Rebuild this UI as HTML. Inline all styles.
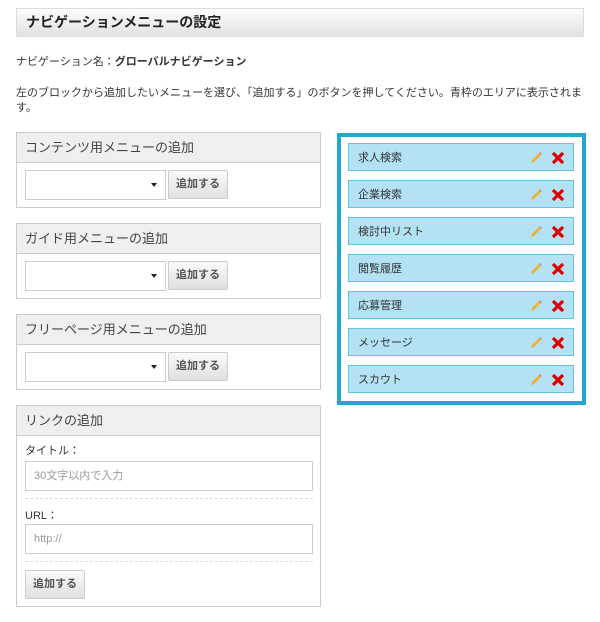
<!DOCTYPE html>
<html><head><meta charset="utf-8"><style>
*{box-sizing:border-box;margin:0;padding:0}
body{width:600px;height:622px;background:#fff;font-family:"Liberation Sans","Noto Sans CJK JP",sans-serif;color:#333;font-size:11px;position:relative;overflow:hidden}
.a{position:absolute}
.hd{left:16px;top:8px;width:568px;height:29px;background:linear-gradient(#fdfdfd,#e2e2e2);border:1px solid #ddd;font-weight:bold;font-size:14px;line-height:27px;padding-left:9px;color:#222}
.box{left:16px;width:305px;border:1px solid #ccc;background:#fff}
.bh{height:30px;background:#efefef;border-bottom:1px solid #ccc;font-size:13px;line-height:29px;padding-left:8px;color:#444}
.sel{position:absolute;left:8px;width:141px;height:30px;border:1px solid #ccc;background:#fff}
.sel:after{content:"";position:absolute;right:8px;top:12px;border-left:3px solid transparent;border-right:3px solid transparent;border-top:4px solid #222}
.btn{position:absolute;width:60px;height:29px;border:1px solid #ccc;border-radius:2px;background:linear-gradient(#fafafa,#e0e0e0);font-size:11px;line-height:27px;text-align:center;color:#555;font-weight:bold}
.inp{position:absolute;left:8px;width:288px;height:30px;border:1px solid #ccc;font-size:11px;line-height:28px;padding-left:8px;color:#999}
.dash{position:absolute;left:8px;width:288px;border-top:1px dashed #ddd}
.panel{left:337px;top:133px;width:249px;height:272px;border:4px solid #22a7d4;background:#fff}
.it{position:absolute;left:7px;width:226px;height:28px;background:#b2e2f3;border:1px solid #62c3e2;font-size:11px;line-height:28px;padding-left:9px;color:#333}
.it svg{position:absolute;top:7px}
</style></head><body>
<div class="a hd">ナビゲーションメニューの設定</div>
<div class="a" style="left:16px;top:53px">ナビゲーション名：<b>グローバルナビゲーション</b></div>
<div class="a" style="left:16px;top:86px;width:570px;line-height:15px">左のブロックから追加したいメニューを選び、「追加する」のボタンを押してください。青枠のエリアに表示されます。</div>

<div class="a box" style="top:132px;height:76px"><div class="bh">コンテンツ用メニューの追加</div><div class="sel" style="top:37px"></div><div class="btn" style="left:151px;top:37px">追加する</div></div>
<div class="a box" style="top:223px;height:76px"><div class="bh">ガイド用メニューの追加</div><div class="sel" style="top:37px"></div><div class="btn" style="left:151px;top:37px">追加する</div></div>
<div class="a box" style="top:314px;height:76px"><div class="bh">フリーページ用メニューの追加</div><div class="sel" style="top:37px"></div><div class="btn" style="left:151px;top:37px">追加する</div></div>
<div class="a box" style="top:405px;height:202px"><div class="bh">リンクの追加</div>
<div class="a" style="left:8px;top:36px">タイトル：</div>
<div class="inp" style="top:55px">30文字以内で入力</div>
<div class="dash" style="top:92px"></div>
<div class="a" style="left:8px;top:101px">URL：</div>
<div class="inp" style="top:118px">http://</div>
<div class="dash" style="top:155px"></div>
<div class="btn" style="left:8px;top:164px">追加する</div>
</div>

<div class="a panel">
<div class="it" style="top:6px">求人検索<svg style="left:180px" width="14" height="14"><path d="M2 12L3 9L10 2L12 4L5 11Z" fill="#f0b030"/><path d="M10 2L12 4L13 3L11 1Z" fill="#b08ac8"/></svg><svg style="left:202px" width="14" height="14"><path d="M2 2L12 12M12 2L2 12" stroke="#d00" stroke-width="3.2"/></svg></div>
<div class="it" style="top:43px">企業検索<svg style="left:180px" width="14" height="14"><path d="M2 12L3 9L10 2L12 4L5 11Z" fill="#f0b030"/><path d="M10 2L12 4L13 3L11 1Z" fill="#b08ac8"/></svg><svg style="left:202px" width="14" height="14"><path d="M2 2L12 12M12 2L2 12" stroke="#d00" stroke-width="3.2"/></svg></div>
<div class="it" style="top:80px">検討中リスト<svg style="left:180px" width="14" height="14"><path d="M2 12L3 9L10 2L12 4L5 11Z" fill="#f0b030"/><path d="M10 2L12 4L13 3L11 1Z" fill="#b08ac8"/></svg><svg style="left:202px" width="14" height="14"><path d="M2 2L12 12M12 2L2 12" stroke="#d00" stroke-width="3.2"/></svg></div>
<div class="it" style="top:117px">閲覧履歴<svg style="left:180px" width="14" height="14"><path d="M2 12L3 9L10 2L12 4L5 11Z" fill="#f0b030"/><path d="M10 2L12 4L13 3L11 1Z" fill="#b08ac8"/></svg><svg style="left:202px" width="14" height="14"><path d="M2 2L12 12M12 2L2 12" stroke="#d00" stroke-width="3.2"/></svg></div>
<div class="it" style="top:154px">応募管理<svg style="left:180px" width="14" height="14"><path d="M2 12L3 9L10 2L12 4L5 11Z" fill="#f0b030"/><path d="M10 2L12 4L13 3L11 1Z" fill="#b08ac8"/></svg><svg style="left:202px" width="14" height="14"><path d="M2 2L12 12M12 2L2 12" stroke="#d00" stroke-width="3.2"/></svg></div>
<div class="it" style="top:191px">メッセージ<svg style="left:180px" width="14" height="14"><path d="M2 12L3 9L10 2L12 4L5 11Z" fill="#f0b030"/><path d="M10 2L12 4L13 3L11 1Z" fill="#b08ac8"/></svg><svg style="left:202px" width="14" height="14"><path d="M2 2L12 12M12 2L2 12" stroke="#d00" stroke-width="3.2"/></svg></div>
<div class="it" style="top:228px">スカウト<svg style="left:180px" width="14" height="14"><path d="M2 12L3 9L10 2L12 4L5 11Z" fill="#f0b030"/><path d="M10 2L12 4L13 3L11 1Z" fill="#b08ac8"/></svg><svg style="left:202px" width="14" height="14"><path d="M2 2L12 12M12 2L2 12" stroke="#d00" stroke-width="3.2"/></svg></div>
</div>
</body></html>
